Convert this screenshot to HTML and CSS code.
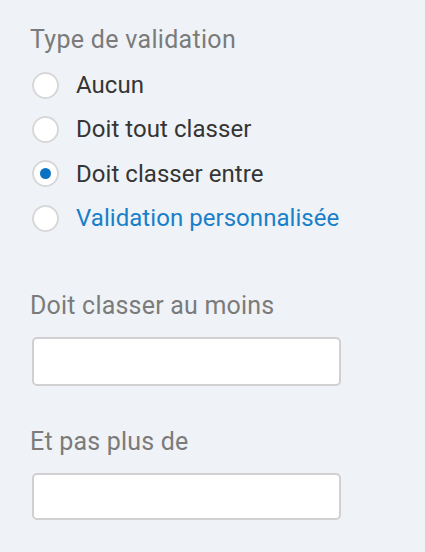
FILE: index.html
```html
<!DOCTYPE html>
<html lang="fr">
<head>
    <meta charset="UTF-8">
    <meta name="viewport" content="width=device-width, initial-scale=1.0">
    <title>Type de validation</title>
    <link rel="stylesheet" href="styles.css">
</head>
<body>
    <div class="panel">
        <p class="section-title">Type de validation</p>

        <ul class="radio-list">
            <li class="radio-item">
                <span class="radio"></span>
                <span class="radio-label">Aucun</span>
            </li>
            <li class="radio-item">
                <span class="radio"></span>
                <span class="radio-label">Doit tout classer</span>
            </li>
            <li class="radio-item">
                <span class="radio checked"></span>
                <span class="radio-label">Doit classer entre</span>
            </li>
            <li class="radio-item">
                <span class="radio"></span>
                <span class="radio-label link">Validation personnalisée</span>
            </li>
        </ul>

        <div class="field first">
            <label for="min" class="field-label">Doit classer au moins</label>
            <input type="text" id="min" class="field-input">
        </div>

        <div class="field">
            <label for="max" class="field-label">Et pas plus de</label>
            <input type="text" id="max" class="field-input short">
        </div>
    </div>
</body>
</html>
```

FILE: styles.css
```css
:root {
    --background-color: #eff3f7;
    --muted-color: #7b7b7b;
    --text-color: #353535;
    --link-color: #1a7fc9;
    --border-color: #d0d0d0;
}

* {
    box-sizing: border-box;
    margin: 0;
    padding: 0;
    font-family: Roboto, 'Liberation Sans', sans-serif;
}

body {
    background-color: var(--background-color);
    color: var(--text-color);
}

.panel {
    padding: 25px 0 0 30px;
}

.section-title {
    color: var(--muted-color);
    font-size: 25px;
    line-height: 30px;
    letter-spacing: 0.3px;
}

.radio-list {
    list-style: none;
    margin-top: 8px;
}

.radio-item {
    display: flex;
    align-items: center;
    height: 44.3px;
}

.radio {
    width: 27px;
    height: 27px;
    border-radius: 50%;
    background-color: #fff;
    border: 2px solid #d8d8d8;
    margin: 0 17px 0 2px;
    display: flex;
    align-items: center;
    justify-content: center;
}

.radio.checked::after {
    content: '';
    width: 11px;
    height: 11px;
    border-radius: 50%;
    background-color: #0b72c3;
}

.radio-label {
    font-size: 24px;
    letter-spacing: 0.05px;
}

.radio-label.link {
    color: var(--link-color);
}

.field {
    margin-top: 41px;
}

.field.first {
    margin-top: 51px;
}

.field-label {
    display: block;
    color: var(--muted-color);
    font-size: 25px;
    line-height: 30px;
    letter-spacing: 0.2px;
}

.field-input {
    display: block;
    width: 309px;
    height: 49px;
    margin: 16px 0 0 2px;
    border: 2px solid var(--border-color);
    border-radius: 5px;
    background-color: #fff;
    font-size: 18px;
    padding: 0 10px;
}

.field-input.short {
    height: 47px;
}
```
